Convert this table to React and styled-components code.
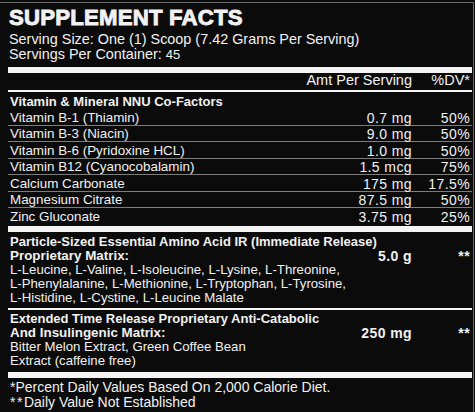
import React from "react";
import styled, { createGlobalStyle, css } from "styled-components";

const GlobalStyle = createGlobalStyle`
  html, body {
    margin: 0;
    padding: 0;
    background: #0b0b0b;
  }
  body {
    width: 475px;
    height: 412px;
    overflow: hidden;
    font-family: "Liberation Sans", Arial, sans-serif;
    color: #f1f1f1;
  }
`;

const Label = styled.div`
  box-sizing: border-box;
  width: 474px;
  height: 410px;
  margin-top: 2px;
  padding: 0 1px 0 8px;
  border-top: 1px solid #6c6c6c;
  border-right: 1px solid #6c6c6c;
  background: #0b0b0b;
`;

const Title = styled.h1`
  margin: 3px 0 0 1px;
  font-size: 22.2px;
  line-height: 24px;
  font-weight: 700;
  letter-spacing: 0.2px;
  -webkit-text-stroke: 0.9px #f1f1f1;
`;

const ServingInfo = styled.div`
  margin: 2px 0 0 1px;
  font-size: 14.4px;
  line-height: 14.8px;
`;

const Count = styled.span`
  font-size: 13px;
`;

const Bar = styled.div`
  background: #f4f4f4;
  height: ${p => (p.thick ? 6 : 2)}px;
  margin-top: ${p => p.gap || 0}px;
`;

const Grid = styled.div`
  display: grid;
  grid-template-columns: 1fr 110px 58px;
  padding: 0 2px;
  font-size: 13.4px;
  line-height: 14px;
  white-space: nowrap;
  & > :nth-child(3n + 2),
  & > :nth-child(3n + 3) {
    text-align: right;
    font-size: 14px;
    letter-spacing: 0.4px;
  }
`;

const ColumnHead = styled(Grid)`
  font-size: 14.5px;
  margin-bottom: 3px;
  & > :nth-child(3n + 2),
  & > :nth-child(3n + 3) {
    font-size: 14.5px;
    letter-spacing: 0;
  }
`;

const SectionHead = styled.div`
  padding: 4px 2px 0;
  font-size: 13px;
  font-weight: 700;
  line-height: 12px;
  height: 12px;
`;

const Row = styled(Grid)`
  box-sizing: border-box;
  height: 16.5px;
  padding-top: 1.5px;
  border-top: 1px solid ${p => (p.first ? "transparent" : "#7d7d7d")};
`;

const Block = styled.div`
  padding: ${p => p.pad};
`;

const Line = styled.div`
  padding: 0 2px;
  font-size: 13.2px;
  line-height: 14px;
  white-space: nowrap;
  ${p =>
    p.bold &&
    css`
      font-size: 13px;
      font-weight: 700;
    `}
`;

const BoldCell = styled.div`
  font-weight: 700;
`;

const Footer = styled.div`
  padding: 2px 2px 0;
  font-size: 14px;
  line-height: 15px;
`;

const Stars = styled.span`
  letter-spacing: 1.5px;
`;

const vitamins = [
  ["Vitamin B-1 (Thiamin)", "0.7 mg", "50%"],
  ["Vitamin B-3 (Niacin)", "9.0 mg", "50%"],
  ["Vitamin B-6 (Pyridoxine HCL)", "1.0 mg", "50%"],
  ["Vitamin B12 (Cyanocobalamin)", "1.5 mcg", "75%"],
  ["Calcium Carbonate", "175 mg", "17.5%"],
  ["Magnesium Citrate", "87.5 mg", "50%"],
  ["Zinc Gluconate", "3.75 mg", "25%"]
];

const Blend = ({ pad, title, name, amount, lines }) => (
  <Block pad={pad}>
    <Line bold>{title}</Line>
    <Grid>
      <BoldCell>{name}</BoldCell>
      <BoldCell>{amount}</BoldCell>
      <BoldCell>**</BoldCell>
    </Grid>
    {lines.map(l => (
      <Line key={l}>{l}</Line>
    ))}
  </Block>
);

const App = () => (
  <>
    <GlobalStyle />
    <Label>
      <Title>SUPPLEMENT FACTS</Title>
      <ServingInfo>
        <div>Serving Size: One (1) Scoop (7.42 Grams Per Serving)</div>
        <div>
          Servings Per Container: <Count>45</Count>
        </div>
      </ServingInfo>
      <Bar thick gap={4.5} />
      <ColumnHead>
        <div />
        <div>Amt Per Serving</div>
        <div>%DV*</div>
      </ColumnHead>
      <Bar />
      <SectionHead>Vitamin &amp; Mineral NNU Co-Factors</SectionHead>
      {vitamins.map(([name, amt, dv], i) => (
        <Row key={name} first={i === 0}>
          <div>{name}</div>
          <div>{amt}</div>
          <div>{dv}</div>
        </Row>
      ))}
      <Bar thick gap={2.5} />
      <Blend
        pad="3px 0 2.5px"
        title="Particle-Sized Essential Amino Acid IR (Immediate Release)"
        name="Proprietary Matrix:"
        amount="5.0 g"
        lines={[
          "L-Leucine, L-Valine, L-Isoleucine, L-Lysine, L-Threonine,",
          "L-Phenylalanine, L-Methionine, L-Tryptophan, L-Tyrosine,",
          "L-Histidine, L-Cystine, L-Leucine Malate"
        ]}
      />
      <Bar />
      <Blend
        pad="2.2px 0 4.3px"
        title="Extended Time Release Proprietary Anti-Catabolic"
        name="And Insulingenic Matrix:"
        amount="250 mg"
        lines={[
          "Bitter Melon Extract, Green Coffee Bean",
          "Extract (caffeine free)"
        ]}
      />
      <Bar thick />
      <Footer>
        <div>*Percent Daily Values Based On 2,000 Calorie Diet.</div>
        <div>
          <Stars>**</Stars>Daily Value Not Established
        </div>
      </Footer>
    </Label>
  </>
);

export default App;
